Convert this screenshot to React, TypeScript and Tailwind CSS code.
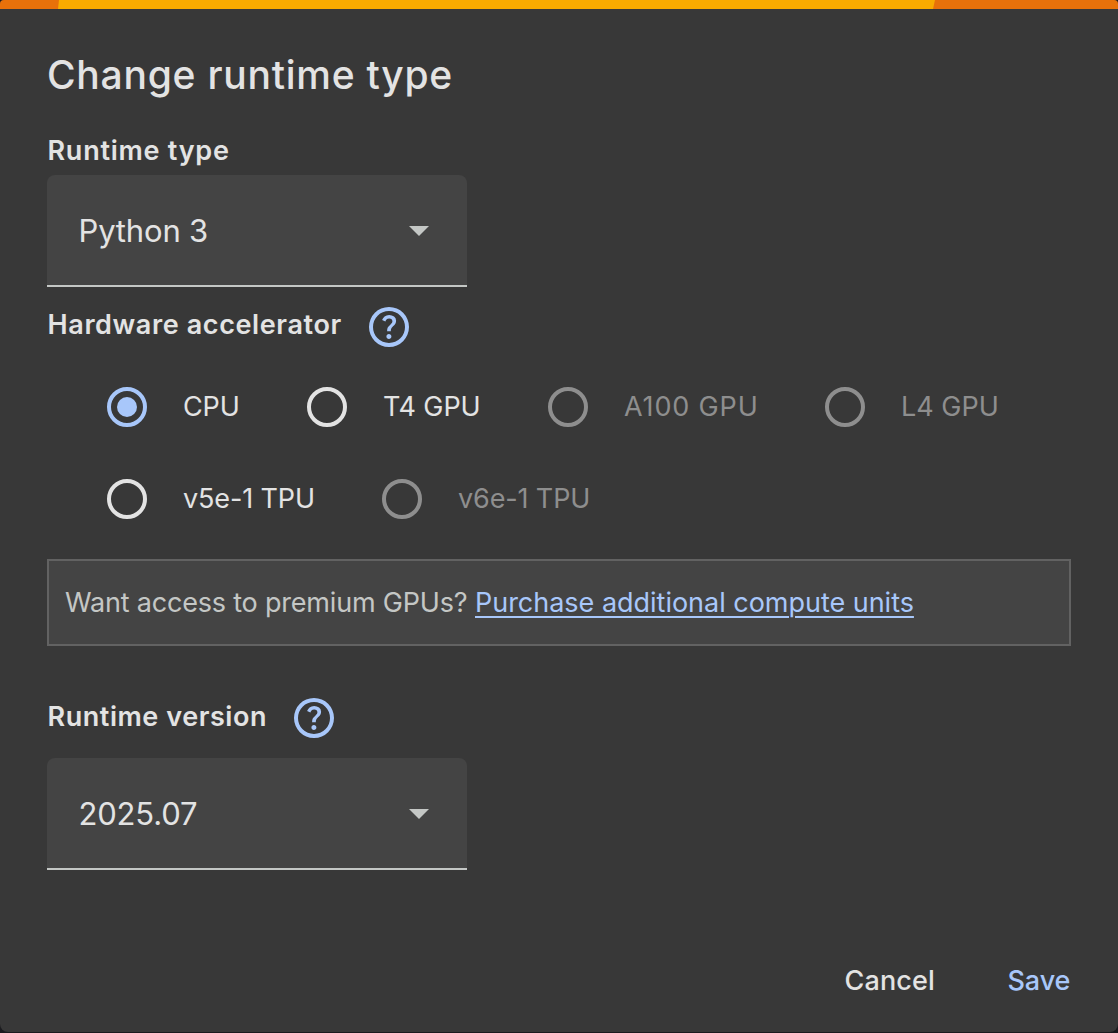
function HelpIcon() {
  return (
    <svg viewBox="80 -880 800 800" className="size-10 shrink-0 fill-[#a8c7fa]">
      <path d="M478-240q21 0 35.5-14.5T528-290q0-21-14.5-35.5T478-340q-21 0-35.5 14.5T428-290q0 21 14.5 35.5T478-240Zm-36-154h74q0-33 7.5-52t42.5-52q26-26 41-49.5t15-56.5q0-56-41-86t-97-30q-57 0-92.5 30T342-618l66 26q5-18 22.5-39t53.5-21q32 0 48 17.5t16 38.5q0 20-12 37.5T506-526q-44 39-54 59t-10 73Zm38 314q-83 0-156-31.5T197-197q-54-54-85.5-127T80-480q0-83 31.5-156T197-763q54-54 127-85.5T480-880q83 0 156 31.5T763-763q54 54 85.5 127T880-480q0 83-31.5 156T763-197q-54 54-127 85.5T480-80Zm0-80q134 0 227-93t93-227q0-134-93-227t-227-93q-134 0-227 93t-93 227q0 134 93 227t227 93Z" />
    </svg>
  );
}

function Select({ value, className }: { value: string; className: string }) {
  return (
    <button
      className={`flex h-28 w-[420px] items-center justify-between rounded-t-lg border-b-2 border-[#c4c7c5] bg-[#444444] pt-0.5 pr-[38px] pl-[31.5px] text-[31px] font-normal tracking-[-0.17px] ${className}`}
    >
      <span className="leading-10">{value}</span>
      <svg viewBox="0 0 20 10" className="h-2.5 w-5 fill-[#c4c7c5]">
        <path d="M0 0h20L10 10z" />
      </svg>
    </button>
  );
}

type OptionProps = {
  label: string;
  spacing: string;
  width: string;
  checked?: boolean;
  disabled?: boolean;
};

function Option({ label, spacing, width, checked, disabled }: OptionProps) {
  const ring = checked ? "border-[#a8c7fa]" : disabled ? "border-[#8e8e8e]" : "border-[#e3e3e3]";
  return (
    <label className={`flex h-10 items-center ${width} ${disabled ? "text-[#8e8e8e]" : ""}`}>
      <span className={`flex size-10 shrink-0 items-center justify-center rounded-full border-4 ${ring}`}>
        {checked && <span className="size-5 rounded-full bg-[#a8c7fa]" />}
      </span>
      <span className={`ml-9 font-normal whitespace-nowrap ${spacing}`}>{label}</span>
    </label>
  );
}

export default function App() {
  return (
    <div className="h-[1033px] w-[1118px] bg-[#1b1b1f]">
      <div className="flex h-[1032px] flex-col overflow-hidden rounded-t-[4px] rounded-b-lg bg-[#383838] font-['Inter',sans-serif] text-[27px] leading-[30px] text-[#e3e3e3]">
        <svg viewBox="0 0 1118 9" className="h-[9px] w-full shrink-0">
          <path d="M0 0h1118v9H0z" fill="#e8710a" />
          <path d="M59 0h876l-2 9H58z" fill="#f9ab00" />
        </svg>
        <div className="flex flex-col px-[47px]">
          <h1 className="mt-[41px] text-[39px] leading-[50px] font-medium tracking-[0.75px]">Change runtime type</h1>

          <h2 className="mt-9 ml-[0.5px] font-semibold tracking-[0.75px]">Runtime type</h2>
          <Select value="Python 3" className="mt-[9px]" />

          <div className="mt-5 flex h-10 items-center">
            <h2 className="w-[322px] pb-1 pl-[0.5px] font-semibold tracking-[0.62px]">Hardware accelerator</h2>
            <HelpIcon />
          </div>

          <div className="mt-10 flex flex-col gap-[52px] pl-[60px]">
            <div className="flex">
              <Option label="CPU" width="w-[200px]" spacing="tracking-[-0.1px]" checked />
              <Option label="T4 GPU" width="w-[241px]" spacing="tracking-[-0.1px]" />
              <Option label="A100 GPU" width="w-[277px]" spacing="tracking-[0.85px]" disabled />
              <Option label="L4 GPU" width="w-[200px]" spacing="tracking-normal" disabled />
            </div>
            <div className="flex">
              <Option label="v5e-1 TPU" width="w-[275px]" spacing="tracking-[-0.13px]" />
              <Option label="v6e-1 TPU" width="w-[275px]" spacing="tracking-[-0.13px]" disabled />
            </div>
          </div>

          <div className="mt-10 flex h-[87px] items-center border-2 border-[#626262] bg-[#444444] pl-4 font-normal whitespace-nowrap">
            <span className="w-[410px] tracking-[-0.2px] text-[#c4c7c5]">Want access to premium GPUs?</span>
            <a className="tracking-[-0.02px] text-[#a8c7fa] underline decoration-2 underline-offset-4">
              Purchase additional compute units
            </a>
          </div>

          <div className="mt-[52px] flex h-10 items-center">
            <h2 className="w-[247px] pb-0.5 pl-[0.5px] font-semibold tracking-[0.55px]">Runtime version</h2>
            <HelpIcon />
          </div>
          <Select value="2025.07" className="mt-5" />

          <div className="mt-24 flex justify-end font-medium">
            <button className="w-[163px] pl-[0.5px] text-left tracking-[0.15px]">Cancel</button>
            <button className="w-16 pl-[0.5px] text-left tracking-[-0.1px] text-[#a8c7fa]">Save</button>
          </div>
        </div>
      </div>
    </div>
  );
}
